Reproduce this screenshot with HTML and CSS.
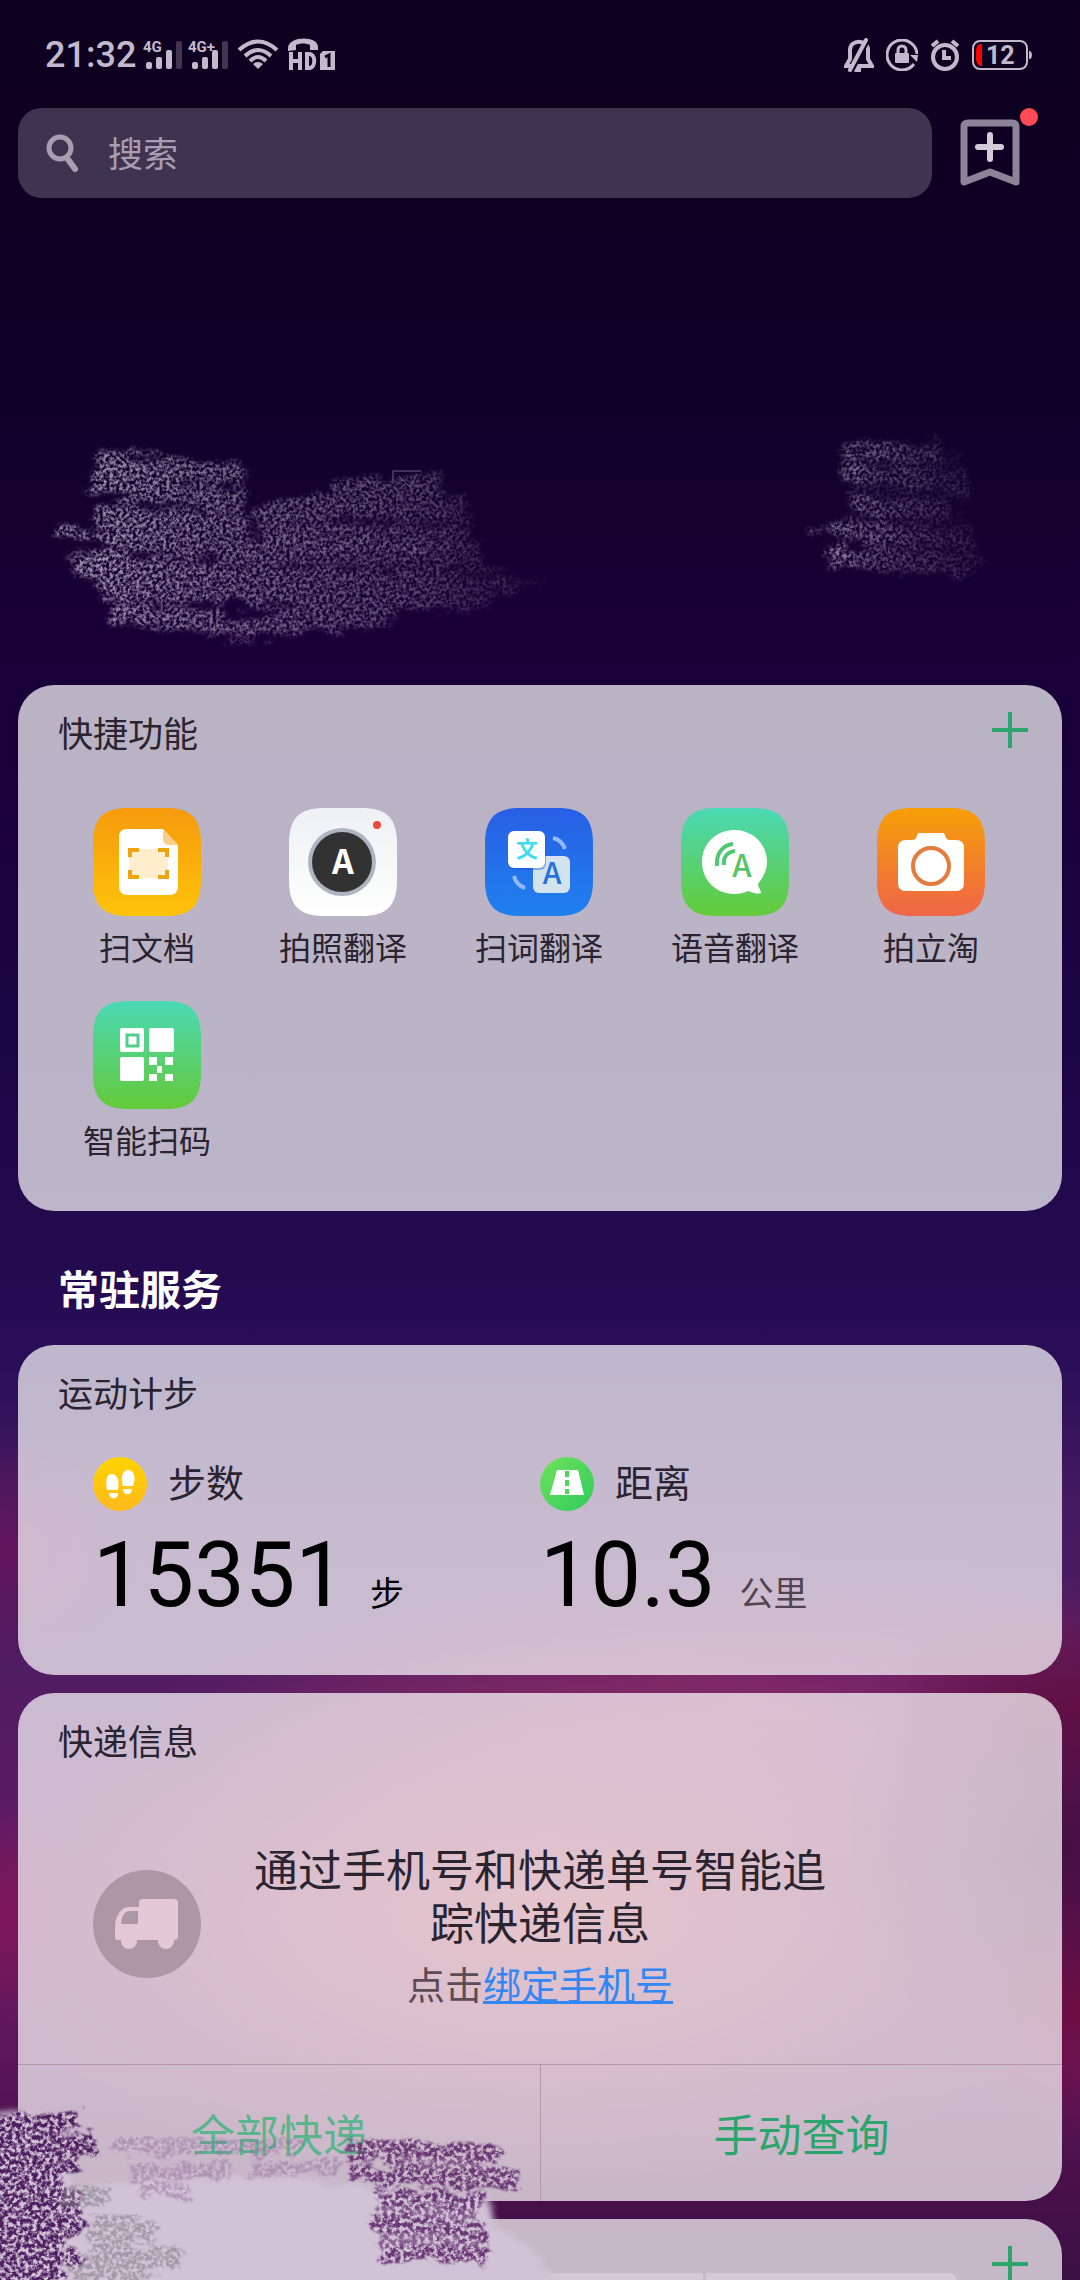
FILE: index.html
```html
<!DOCTYPE html>
<html lang="zh-CN">
<head>
  <meta charset="UTF-8">
  <meta name="viewport" content="width=device-width, initial-scale=1.0">
  <title>智能助理</title>
  <link rel="stylesheet" href="styles.css">
</head>
<body>

  <!-- Status bar -->
  <div class="status-bar">
    <div class="status-left">
      <span class="time">21:32</span>
      <svg width="40" height="32" viewBox="0 0 40 32">
        <text class="net" x="1" y="13">4G</text>
        <rect x="4" y="23" width="6" height="7" rx="2"/><rect x="14" y="18" width="6" height="12" rx="2"/>
        <rect x="24" y="11" width="6" height="19" rx="2"/><rect class="dim" x="34" y="2" width="6" height="28" rx="2"/>
      </svg>
      <svg width="40" height="32" viewBox="0 0 40 32">
        <text class="net" x="0" y="13">4G+</text>
        <rect x="4" y="23" width="6" height="7" rx="2"/><rect x="14" y="18" width="6" height="12" rx="2"/>
        <rect x="24" y="11" width="6" height="19" rx="2"/><rect class="dim" x="34" y="2" width="6" height="28" rx="2"/>
      </svg>
      <svg width="48" height="32" viewBox="0 0 48 32">
        <g fill="none" stroke="#c3b9cd" stroke-width="4">
          <path d="M5 11Q24 -6 43 11"/>
          <path d="M11 17Q24 5 37 17"/>
          <path d="M16 22Q24 14 32 22"/>
        </g>
        <path d="M19 25Q24 21 29 25L24 30Z"/>
      </svg>
      <svg width="48" height="34" viewBox="0 0 48 34">
        <path d="M0 10C0 -2 30 -3 30 9V12H22V7C18 5 12 5 8 7V12L0 13Z"/>
        <path d="M3 14V32M12 14V32M3 23H12M19 16V30H21C28 30 28 16 21 16Z" fill="none" stroke="#c3b9cd" stroke-width="4"/>
        <path d="M35 13H47V32H32V16Z"/>
        <path d="M37 19L41 17V29" fill="none" stroke="#0e0020" stroke-width="3"/>
      </svg>
    </div>
    <div class="status-right">
      <svg width="30" height="34" viewBox="0 0 30 34">
        <path d="M2 28H28L24 21V12C24 1 6 1 6 12V21Z M10 28L12 32H17" fill="none" stroke="#c3b9cd" stroke-width="4"/>
        <path d="M25 2L9 32" stroke="#0e0020" stroke-width="3"/>
        <path d="M22 2L6 32" stroke="#c3b9cd" stroke-width="4" stroke-linecap="round"/>
      </svg>
      <svg width="32" height="32" viewBox="0 0 32 32">
        <path d="M28 25A15 15 0 1 1 31 15" fill="none" stroke="#c3b9cd" stroke-width="3"/>
        <path d="M24 16H32L31 23Z"/>
        <rect x="9" y="14" width="14" height="10" rx="1"/>
        <path d="M12 15V11A4 4 0 0 1 20 11V15" fill="none" stroke="#c3b9cd" stroke-width="3"/>
      </svg>
      <svg width="30" height="32" viewBox="0 0 30 32">
        <circle cx="15" cy="18" r="12" fill="none" stroke="#c3b9cd" stroke-width="4"/>
        <path d="M2 7L8 2M28 7L22 2M14 11V19H21" fill="none" stroke="#c3b9cd" stroke-width="4"/>
      </svg>
      <svg width="60" height="30" viewBox="0 0 60 30">
        <rect x="1" y="1" width="54" height="28" rx="7" fill="none" stroke="#c3b9cd" stroke-width="2"/>
        <path d="M10 4V26H8Q4 24 4 19V11Q4 5 8 4Z" fill="#ff0000"/>
        <path d="M57 11H58Q60 12 60 15T58 19H57Z"/>
        <text class="level" x="14" y="24">12</text>
      </svg>
    </div>
  </div>

  <!-- Search -->
  <header class="top">
    <label class="search">
      <svg width="34" height="40" viewBox="0 0 34 40">
        <g fill="none" stroke="#a89eb2">
          <circle cx="14" cy="15" r="11" stroke-width="5"/>
          <path d="M21 25L29 36" stroke-width="6" stroke-linecap="round"/>
        </g>
      </svg>
      <input type="search" placeholder="搜索" aria-label="搜索">
    </label>
    <button class="bookmark" aria-label="添加">
      <svg width="60" height="68" viewBox="0 0 60 68">
        <path d="M4 8Q4 4 8 4H52Q56 4 56 8V63L30 53L4 63Z" fill="none" stroke="#8c8398" stroke-width="7" stroke-linejoin="round"/>
        <path d="M30 16V40M18 28H41" stroke="#d2ccd8" stroke-width="6" stroke-linecap="round"/>
      </svg>
      <span class="badge"></span>
    </button>
  </header>

  <!-- Chalk strokes on the wallpaper -->
  <svg class="chalk" viewBox="0 0 1080 487" preserveAspectRatio="none" aria-hidden="true">
    <defs>
      <filter id="chalk" x="-10%" y="-20%" width="120%" height="140%" color-interpolation-filters="sRGB">
        <feTurbulence type="fractalNoise" baseFrequency="0.04 0.12" numOctaves="3" seed="4" result="warp"/>
        <feDisplacementMap in="SourceGraphic" in2="warp" scale="26" xChannelSelector="R" yChannelSelector="G" result="rough"/>
        <feGaussianBlur in="rough" stdDeviation="2" result="soft"/>
        <feTurbulence type="fractalNoise" baseFrequency="0.3" numOctaves="3" seed="9"/>
        <feColorMatrix values="0 0 0 0 1  0 0 0 0 1  0 0 0 0 1  3 0 0 0 -1.05" result="grain"/>
        <feComposite in="soft" in2="grain" operator="in"/>
      </filter>
      <linearGradient id="fadeLeft" gradientUnits="userSpaceOnUse" x1="60" y1="0" x2="540" y2="0">
        <stop offset="0" stop-color="#a898b4"/>
        <stop offset="0.3" stop-color="#a08fae" stop-opacity="0.75"/>
        <stop offset="0.75" stop-color="#8a7799" stop-opacity="0.55"/>
        <stop offset="1" stop-color="#8a7799" stop-opacity="0.1"/>
      </linearGradient>
      <linearGradient id="fadeRight" gradientUnits="userSpaceOnUse" x1="800" y1="0" x2="1000" y2="0">
        <stop offset="0" stop-color="#a898b4" stop-opacity="0.9"/>
        <stop offset="0.4" stop-color="#a08fae" stop-opacity="0.5"/>
        <stop offset="1" stop-color="#8a7799" stop-opacity="0.1"/>
      </linearGradient>
    </defs>
    <g filter="url(#chalk)" fill="none" stroke="url(#fadeLeft)" stroke-width="23">
      <path d="M95 264L245 278M92 284L243 306M95 316L250 330M110 338L270 354L480 358M75 365L300 380L510 386M100 388L300 399L490 402M112 412L250 430L390 414"/>
      <path d="M255 318L330 308L470 312M262 336L470 340M335 292L440 288"/>
      <path d="M56 334L120 340M66 360L110 368M500 384L545 386" stroke-width="8"/>
    </g>
    <g filter="url(#chalk)" fill="none" stroke="url(#fadeRight)" stroke-width="18">
      <path d="M842 256L940 252M842 276L970 284M850 308L950 312M830 332L975 342M830 359L980 366"/>
      <path d="M850 266L960 264M850 292L970 298M860 322L970 326M870 346L980 352" opacity="0.4"/>
      <path d="M808 330L840 333M824 356L850 360M900 374H970" stroke-width="5"/>
    </g>
    <path d="M393 284V273H421M399 278L410 289L417 276" fill="none" stroke="#6f6080"/>
  </svg>

  <main>
    <!-- Shortcuts -->
    <section class="card">
      <div class="card-head">
        <h3>快捷功能</h3>
        <button class="add" aria-label="添加快捷功能">
          <svg width="36" height="36" viewBox="0 0 36 36"><path d="M18 0V36M0 18H36" stroke="#2ba56c" stroke-width="4"/></svg>
        </button>
      </div>
      <nav class="shortcuts">
        <a href="#">
          <svg width="108" height="108" viewBox="0 0 108 108">
            <defs>
              <linearGradient id="orange" x2="0" y2="1"><stop stop-color="#f59a0c"/><stop offset="1" stop-color="#ffc30b"/></linearGradient>
              <path id="tile" d="M0 36C0 10 10 0 36 0H72C98 0 108 10 108 36V72C108 98 98 108 72 108H36C10 108 0 98 0 72Z"/>
            </defs>
            <use href="#tile" fill="url(#orange)"/>
            <path d="M34 21H70L85 37V78Q85 87 76 87H35Q26 87 26 78V29Q26 21 34 21Z" fill="#fff"/>
            <path d="M70 21L85 37H76Q70 37 70 31Z" fill="#fbcf8a"/>
            <rect x="36" y="41" width="39" height="29" rx="4" fill="#ffedcc"/>
            <path d="M37 49V42H46M65 42H74V49M37 62V69H46M65 69H74V62" fill="none" stroke="#efa30f" stroke-width="4"/>
          </svg>
          <span>扫文档</span>
        </a>
        <a href="#">
          <svg width="108" height="108" viewBox="0 0 108 108">
            <defs><linearGradient id="white" x2="0" y2="1"><stop stop-color="#eef0f4"/><stop offset="1" stop-color="#fff"/></linearGradient></defs>
            <use href="#tile" fill="url(#white)"/>
            <circle cx="53" cy="54" r="34" fill="#afb4c1"/>
            <circle cx="53" cy="54" r="30" fill="#323232"/>
            <circle cx="88" cy="17" r="4" fill="#e94b3c"/>
            <text class="glyph" x="54" y="66" font-size="34" fill="#fff">A</text>
          </svg>
          <span>拍照翻译</span>
        </a>
        <a href="#">
          <svg width="108" height="108" viewBox="0 0 108 108">
            <defs><linearGradient id="blue" x2="0" y2="1"><stop stop-color="#285fe5"/><stop offset="1" stop-color="#2080ee"/></linearGradient></defs>
            <use href="#tile" fill="url(#blue)"/>
            <path d="M68 30Q77 32 80 41M29 68Q31 77 40 80" fill="none" stroke="#92b8f5" stroke-width="4"/>
            <rect x="48" y="48" width="37" height="37" rx="6" fill="#d2e3ed"/>
            <text class="glyph thin" x="67" y="76" font-size="30" fill="#2672dc">A</text>
            <rect x="24" y="25" width="37" height="37" rx="6" fill="#1a56c0" opacity="0.4"/>
            <rect x="23" y="23" width="37" height="37" rx="6" fill="#fff"/>
            <text class="glyph" x="42" y="49" font-size="22" fill="#43dbf3">文</text>
          </svg>
          <span>扫词翻译</span>
        </a>
        <a href="#">
          <svg width="108" height="108" viewBox="0 0 108 108">
            <defs><linearGradient id="green" x2="0" y2="1"><stop stop-color="#4bd9b5"/><stop offset="1" stop-color="#64ca39"/></linearGradient></defs>
            <use href="#tile" fill="url(#green)"/>
            <path d="M53 22C72 22 86 36 86 54C86 62 82 70 77 76C77 79 80 82 80 85C76 87 70 84 67 83C63 85 58 86 53 86C35 86 21 72 21 54S35 22 53 22Z" fill="#fff"/>
            <path d="M36 58C35 45 42 37 52 36M43 57C42 49 46 44 54 43" fill="none" stroke="#50c775" stroke-width="4"/>
            <text class="glyph thin" x="61" y="69" font-size="31" fill="#55c567">A</text>
          </svg>
          <span>语音翻译</span>
        </a>
        <a href="#">
          <svg width="108" height="108" viewBox="0 0 108 108">
            <defs><linearGradient id="sunset" x2="0" y2="1"><stop stop-color="#f69f08"/><stop offset="1" stop-color="#ef6548"/></linearGradient></defs>
            <use href="#tile" fill="url(#sunset)"/>
            <path d="M41 25H67L69 30Q70 32 73 32H79Q87 32 87 40V75Q87 83 79 83H29Q21 83 21 75V40Q21 32 29 32H35Q38 32 39 30Z" fill="#fff"/>
            <circle cx="54" cy="58" r="18" fill="none" stroke="#e47a3c" stroke-width="4"/>
          </svg>
          <span>拍立淘</span>
        </a>
        <a href="#">
          <svg width="108" height="108" viewBox="0 0 108 108">
            <use href="#tile" fill="url(#green)"/>
            <g fill="#fff">
              <rect x="27" y="27" width="24" height="24" rx="2"/>
              <rect x="56" y="27" width="25" height="24" rx="2"/>
              <rect x="27" y="56" width="24" height="24" rx="2"/>
              <path d="M56 56H64V64H56ZM72 56H80V64H72ZM64 65H69V72H64ZM56 73H64V80H56ZM72 73H80V80H72Z"/>
            </g>
            <rect x="34" y="34" width="11" height="11" fill="none" stroke="#52cf8c" stroke-width="3"/>
          </svg>
          <span>智能扫码</span>
        </a>
      </nav>
    </section>

    <h2>常驻服务</h2>

    <!-- Step counter -->
    <section class="card">
      <div class="card-head"><h3>运动计步</h3></div>
      <div class="stats">
        <div class="stat">
          <div class="stat-name">
            <svg width="54" height="54" viewBox="0 0 54 54">
              <defs><linearGradient id="gold" x2="0" y2="1"><stop stop-color="#ffd400"/><stop offset="1" stop-color="#ffb91d"/></linearGradient></defs>
              <circle cx="27" cy="27" r="27" fill="url(#gold)"/>
              <g fill="#fff">
                <path d="M14 33C13 27 12 17 19 17S26 27 25 33ZM16 36H25C26 43 16 43 16 36Z"/>
                <path d="M30 29C28 23 28 13 35 13S43 23 40 29ZM30 32H39C39 39 30 39 30 32Z"/>
              </g>
            </svg>
            <span>步数</span>
          </div>
          <div class="stat-value"><strong>15351</strong><span>步</span></div>
        </div>
        <div class="stat">
          <div class="stat-name">
            <svg width="54" height="54" viewBox="0 0 54 54">
              <defs><linearGradient id="road" x2="1" y2="1"><stop stop-color="#71e25a"/><stop offset="1" stop-color="#2ecb5e"/></linearGradient></defs>
              <circle cx="27" cy="27" r="27" fill="url(#road)"/>
              <path d="M17 13H38L44 38H10Z" fill="#fff"/>
              <path d="M27 14V37" stroke="#4bd65c" stroke-width="4" stroke-dasharray="6 3"/>
            </svg>
            <span>距离</span>
          </div>
          <div class="stat-value soft"><strong>10.3</strong><span>公里</span></div>
        </div>
      </div>
    </section>

    <!-- Express delivery -->
    <section class="card">
      <div class="card-head"><h3>快递信息</h3></div>
      <div class="express">
        <svg width="108" height="108" viewBox="0 0 108 108">
          <circle cx="54" cy="54" r="54" fill="#ae97a4"/>
          <g fill="#e4c8d6">
            <path d="M50 29H81Q85 29 85 33V66Q85 70 81 70H24Q22 70 22 67V57C22 47 28 37 35 37H46V33Q46 29 50 29Z"/>
            <circle cx="36" cy="71" r="8"/><circle cx="73" cy="71" r="8"/>
          </g>
          <path d="M45 41V54H28Q29 41 38 41Z" fill="#ae97a4"/>
        </svg>
        <div class="express-text">
          <p class="lead">通过手机号和快递单号智能追踪快递信息</p>
          <p class="hint">点击<a href="#">绑定手机号</a></p>
        </div>
      </div>
      <div class="actions">
        <button class="faded">全部快递</button>
        <button>手动查询</button>
      </div>
    </section>

    <section class="card next">
      <div class="tabs"><span></span><span></span></div>
      <button class="add" aria-label="添加">
        <svg width="36" height="36" viewBox="0 0 36 36"><path d="M18 0V36M0 18H36" stroke="#2ba56c" stroke-width="4"/></svg>
      </button>
    </section>
  </main>

  <!-- Brush strokes over the lower left corner -->
  <svg class="brush" width="580" height="190" viewBox="0 0 580 190" aria-hidden="true">
    <defs>
      <filter id="rough" x="-5%" y="-10%" width="110%" height="120%" color-interpolation-filters="sRGB">
        <feTurbulence type="fractalNoise" baseFrequency="0.05 0.15" numOctaves="3" seed="2"/>
        <feDisplacementMap in="SourceGraphic" scale="20" xChannelSelector="R" yChannelSelector="G"/>
        <feGaussianBlur stdDeviation="3"/>
      </filter>
      <filter id="grainy" x="-10%" y="-20%" width="120%" height="140%" color-interpolation-filters="sRGB">
        <feTurbulence type="fractalNoise" baseFrequency="0.04 0.12" numOctaves="3" seed="7" result="warp"/>
        <feDisplacementMap in="SourceGraphic" in2="warp" scale="22" xChannelSelector="R" yChannelSelector="G" result="edge"/>
        <feGaussianBlur in="edge" stdDeviation="1" result="soft"/>
        <feTurbulence type="fractalNoise" baseFrequency="0.24" numOctaves="3" seed="5"/>
        <feColorMatrix values="0 0 0 0 1  0 0 0 0 1  0 0 0 0 1  4 0 0 0 -1.4" result="grain"/>
        <feComposite in="soft" in2="grain" operator="in"/>
      </filter>
    </defs>
    <path d="M-10 24H30L80 100L140 88H300L430 106H492V132L530 156L560 200H-10Z" fill="#d1c2d5" filter="url(#rough)"/>
    <path d="M470 120H545" stroke="#c4afca" stroke-width="20" filter="url(#grainy)"/>
    <g fill="none" stroke="#4e1e61" stroke-width="21" filter="url(#grainy)">
      <path d="M-10 36L78 30M-10 56L95 54M-10 76L78 72M-10 96L66 94M-10 116L84 112M-10 136L84 134M-10 156L62 154M-10 172L80 168M-10 188L62 184"/>
      <path d="M-10 60H60M-10 120H50M-10 170H30" stroke-width="44" opacity="0.7"/>
    </g>
    <g fill="none" stroke="#6b3876" stroke-width="18" filter="url(#grainy)">
      <path d="M345 58L500 62M350 84L520 90M375 106L482 112M370 132L488 142M380 160L488 164"/>
      <path d="M390 72L480 74M380 120L480 124M380 148L480 150" stroke-width="12" opacity="0.7"/>
    </g>
    <g fill="none" stroke="#8f6a9a" stroke-width="16" opacity="0.45" filter="url(#grainy)">
      <path d="M110 56H300M130 82H230M140 98L190 104M250 80L340 76"/>
    </g>
    <g fill="none" stroke="#85808c" stroke-width="24" opacity="0.6" filter="url(#grainy)">
      <path d="M60 108L110 104M90 136L155 142M90 156L130 150M80 180L180 166M70 190H140"/>
    </g>
  </svg>

</body>
</html>
```

FILE: styles.css
```css
/* General */
* {
  box-sizing: border-box;
}

body {
  position: relative;
  height: 100vh;
  margin: 0;
  overflow: hidden;
  font-family: Roboto, "Noto Sans CJK SC", sans-serif;
  color: #2a2430;
  background:
    radial-gradient(ellipse 20% 10% at 98% 81%, rgba(58, 8, 52, 0.7), rgba(58, 8, 52, 0) 100%),
    radial-gradient(ellipse 12% 6% at 100% 88%, rgba(125, 15, 68, 0.9), rgba(125, 15, 68, 0) 100%),
    radial-gradient(ellipse 20% 5% at 100% 75%, rgba(110, 14, 65, 0.8), rgba(110, 14, 65, 0) 100%),
    radial-gradient(ellipse 8% 5% at 0% 84%, rgba(130, 20, 88, 0.9), rgba(130, 20, 88, 0) 100%),
    radial-gradient(ellipse 14% 5% at 0% 68%, rgba(105, 20, 92, 0.8), rgba(105, 20, 92, 0) 100%),
    radial-gradient(ellipse 54% 12% at 50% 84%, rgba(168, 58, 84, 1), rgba(168, 58, 84, 0) 100%),
    radial-gradient(ellipse 56% 7% at 70% 75%, rgba(138, 42, 108, 0.85), rgba(138, 42, 108, 0) 100%),
    linear-gradient(#0e0020 0%, #0f0024 12%, #15002f 22%, #190039 30%, #1c0544 45%, #240b50 56%, #2a0f58 60%, #451a60 66%, #501c62 73%, #5c1a66 80%, #5c165c 90%, #480f4a 96%, #3c1145 100%);
}

h2, h3, p {
  margin: 0;
  font-weight: 400;
}

button {
  padding: 0;
  border: 0;
  background: none;
  font: inherit;
  color: inherit;
  cursor: pointer;
}

svg {
  display: block;
  flex: none;
}

/* Status bar */
.status-bar {
  display: flex;
  justify-content: space-between;
  padding: 27px 48px 25px 45px;
  line-height: 56px;
  color: #c3b9cd;
  fill: #c3b9cd;
}

.status-left, .status-right {
  display: flex;
  align-items: center;
  gap: 6px;
}

.status-right {
  gap: 12px;
}

.time {
  font-size: 36px;
  font-weight: 500;
}

.net {
  font-size: 15px;
  font-weight: 700;
}

.level {
  font-size: 25px;
  font-weight: 700;
}

.dim {
  fill: #41344f;
}

/* Search */
.top {
  display: flex;
  align-items: center;
  gap: 28px;
  padding: 0 60px 0 18px;
}

.search {
  display: flex;
  flex: 1;
  align-items: center;
  gap: 28px;
  height: 90px;
  padding: 0 28px;
  border-radius: 24px;
  background: #3f3450;
}

.search input {
  flex: 1;
  min-width: 0;
  padding: 4px 0 0;
  border: 0;
  outline: 0;
  background: none;
  font: inherit;
  font-size: 35px;
  color: #a89eb2;
}

.search input::placeholder {
  color: #a89eb2;
  opacity: 1;
}

.bookmark {
  position: relative;
}

.badge {
  position: absolute;
  top: -11px;
  right: -18px;
  width: 18px;
  height: 18px;
  border-radius: 50%;
  background: #ff4b55;
}

.chalk {
  width: 100%;
  height: 487px;
}

/* Cards */
main {
  padding: 0 18px;
}

.card {
  border-radius: 36px;
  background: rgba(255, 255, 255, 0.7);
  overflow: hidden;
}

.card + .card {
  margin-top: 18px;
}

.card-head {
  display: flex;
  justify-content: space-between;
  padding: 0 34px 0 40px;
}

.card-head h3 {
  font-size: 35px;
  line-height: 102px;
}

.add {
  height: 90px;
}

h2 {
  padding: 26px 40px 0;
  font-size: 41px;
  font-weight: 700;
  line-height: 108px;
  color: #fff;
}

/* Shortcuts */
.shortcuts {
  display: grid;
  grid-template-columns: repeat(5, 1fr);
  row-gap: 27px;
  padding: 21px 33px 44px 31px;
}

.shortcuts a {
  display: flex;
  flex-direction: column;
  align-items: center;
  gap: 8px;
  font-size: 32px;
  line-height: 50px;
  color: inherit;
  text-decoration: none;
}

.glyph {
  font-family: "Noto Sans CJK SC", sans-serif;
  font-weight: 700;
  text-anchor: middle;
}

.thin {
  font-weight: 500;
}

/* Steps */
.stats {
  display: grid;
  grid-template-columns: 1fr 1fr;
  padding: 10px 75px 54px;
}

.stat-name {
  display: flex;
  align-items: center;
  gap: 21px;
  margin-bottom: 20px;
  font-size: 38px;
  line-height: 54px;
}

.stat-value {
  display: flex;
  align-items: baseline;
  gap: 24px;
  height: 90px;
  font-size: 34px;
  line-height: 90px;
  color: #000;
}

.stat-value strong {
  font-size: 90px;
  font-weight: 400;
}

.soft span {
  color: #51434f;
}

/* Express */
.express {
  display: grid;
  grid-template-columns: 108px 1fr 108px;
  align-items: start;
  padding: 51px 75px 53px;
  text-align: center;
}

.express svg {
  margin-top: 24px;
}

.express-text {
  max-width: 600px;
  margin: 0 auto;
}

.lead {
  font-size: 44px;
  line-height: 53px;
}

.hint {
  margin-top: 9px;
  font-size: 38px;
  line-height: 50px;
  color: #5c4c56;
}

.hint a {
  color: #3287f5;
}

.actions {
  display: grid;
  grid-template-columns: 1fr 1fr;
  border-top: 1px solid #b597a7;
}

.actions button {
  height: 136px;
  font-size: 44px;
  color: #2ba56c;
}

.actions button + button {
  border-left: 1px solid #b597a7;
}

.actions .faded {
  color: #5ab58d;
}

/* Card cut off by the bottom of the screen */
.next {
  display: flex;
  justify-content: space-between;
  padding-right: 34px;
}

.tabs {
  display: grid;
  grid-template-columns: 18fr 7fr;
  gap: 3px;
  width: 89%;
  height: 72px;
  margin: 54px 0 34px 40px;
  border-radius: 8px;
  overflow: hidden;
}

.tabs span {
  background: rgba(255, 255, 255, 0.25);
}

/* Brush strokes */
.brush {
  position: absolute;
  bottom: 0;
  left: 0;
  pointer-events: none;
}
```
